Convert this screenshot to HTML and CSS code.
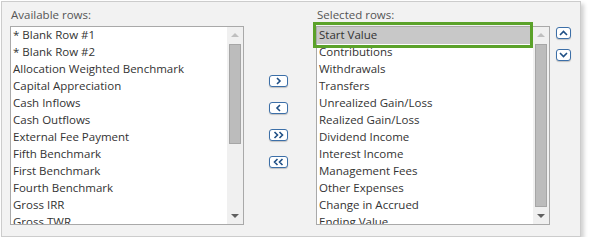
FILE: index.html
```html
<!DOCTYPE html>
<html lang="en">

<head>
  <meta charset="UTF-8">
  <title>Report Rows</title>
  <link rel="stylesheet" href="styles.css">
</head>

<body>
  <div class="panel">
    <div class="column">
      <label class="list-label">Available rows:</label>
      <div class="listbox">
        <ul class="items">
          <li>* Blank Row #1</li>
          <li>* Blank Row #2</li>
          <li>Allocation Weighted Benchmark</li>
          <li>Capital Appreciation</li>
          <li>Cash Inflows</li>
          <li>Cash Outflows</li>
          <li>External Fee Payment</li>
          <li>Fifth Benchmark</li>
          <li>First Benchmark</li>
          <li>Fourth Benchmark</li>
          <li>Gross IRR</li>
          <li>Gross TWR</li>
        </ul>
        <div class="scrollbar">
          <span class="arrow up disabled"></span>
          <div class="track"><div class="thumb thumb-short"></div></div>
          <span class="arrow down"></span>
        </div>
      </div>
    </div>

    <div class="move-buttons">
      <button class="mini" title="Add">
        <svg width="7" height="8" viewBox="0 0 7 8"><path d="M2 1 L5 4 L2 7" /></svg>
      </button>
      <button class="mini" title="Remove">
        <svg width="7" height="8" viewBox="0 0 7 8"><path d="M5 1 L2 4 L5 7" /></svg>
      </button>
      <button class="mini" title="Add all">
        <svg width="11" height="8" viewBox="0 0 11 8"><path d="M1.5 1 L4.5 4 L1.5 7 M6.5 1 L9.5 4 L6.5 7" /></svg>
      </button>
      <button class="mini" title="Remove all">
        <svg width="11" height="8" viewBox="0 0 11 8"><path d="M4.5 1 L1.5 4 L4.5 7 M9.5 1 L6.5 4 L9.5 7" /></svg>
      </button>
    </div>

    <div class="column">
      <label class="list-label">Selected rows:</label>
      <div class="listbox">
        <ul class="items">
          <li class="selected">Start Value</li>
          <li>Contributions</li>
          <li>Withdrawals</li>
          <li>Transfers</li>
          <li>Unrealized Gain/Loss</li>
          <li>Realized Gain/Loss</li>
          <li>Dividend Income</li>
          <li>Interest Income</li>
          <li>Management Fees</li>
          <li>Other Expenses</li>
          <li>Change in Accrued</li>
          <li>Ending Value</li>
        </ul>
        <div class="scrollbar">
          <span class="arrow up disabled"></span>
          <div class="track"><div class="thumb thumb-long"></div></div>
          <span class="arrow down"></span>
        </div>
        <div class="highlight"></div>
      </div>
    </div>

    <div class="order-buttons">
      <button class="mini small" title="Move up">
        <svg width="9" height="6" viewBox="0 0 9 6"><path d="M1 5 L4.5 1.5 L8 5" /></svg>
      </button>
      <button class="mini small" title="Move down">
        <svg width="9" height="6" viewBox="0 0 9 6"><path d="M1 1 L4.5 4.5 L8 1" /></svg>
      </button>
    </div>
  </div>
</body>

</html>
```

FILE: styles.css
```css
*,*::before,*::after { box-sizing: border-box; }

body {
  margin: 0;
  background: #ffffff;
  font-family: "Open Sans", "Noto Sans", sans-serif;
  font-size: 11.5px;
  color: #333333;
}

.panel {
  margin: 1px 0 0 1px;
  width: 580px;
  height: 236px;
  background: #f2f2f2;
  border: 1px solid #cccccc;
  box-shadow: 3px 3px 4px rgba(0,0,0,.18);
  display: flex;
  align-items: flex-start;
  padding: 5px 0 0 8px;
}

.column {
  display: flex;
  flex-direction: column;
  width: 234px;
}

.list-label {
  color: #555555;
  line-height: 16px;
  height: 19px;
  padding-left: 1px;
}

.listbox {
  position: relative;
  display: flex;
  height: 199px;
  background: #ffffff;
  border: 1px solid #a9a9a9;
}

.items {
  list-style: none;
  margin: 0;
  padding: 0;
  flex: 1;
  overflow: hidden;
}

.items li {
  height: 17px;
  line-height: 16px;
  padding-left: 2px;
  white-space: nowrap;
}

.items li.selected {
  background: #c8c8c8;
}

.scrollbar {
  width: 16px;
  background: #f0f0f0;
  display: flex;
  flex-direction: column;
  align-items: center;
}

.arrow {
  width: 0;
  height: 0;
  border-left: 4px solid transparent;
  border-right: 4px solid transparent;
  margin: 6px 0;
}

.arrow.up { border-bottom: 4px solid #606060; }
.arrow.up.disabled { border-bottom-color: #bfbfbf; }
.arrow.down { border-top: 4px solid #606060; }

.track {
  flex: 1;
  width: 100%;
  padding: 1px 2px 0;
}

.thumb {
  background: #bcbcbc;
  border: 1px solid #a6a6a6;
}

.thumb-short { height: 100px; }
.thumb-long { height: 163px; }

.highlight {
  position: absolute;
  left: -4px;
  top: -5px;
  width: 220px;
  height: 26px;
  border: 3px solid #5ba22a;
  pointer-events: none;
}

.move-buttons {
  width: 72px;
  display: flex;
  flex-direction: column;
  align-items: center;
  gap: 15px;
  padding-top: 68px;
  padding-right: 3px;
}

.order-buttons {
  display: flex;
  flex-direction: column;
  gap: 10px;
  padding: 20px 0 0 6px;
}

.mini {
  width: 19px;
  height: 12px;
  padding: 0;
  background: #ffffff;
  border: 1px solid #3c6fa8;
  border-radius: 3px;
  box-shadow: 0 1px 1px rgba(0,0,0,.2);
  display: flex;
  align-items: center;
  justify-content: center;
  cursor: pointer;
}

.mini.small {
  width: 15px;
  height: 12px;
}

.mini svg path {
  fill: none;
  stroke: #1f4f85;
  stroke-width: 1.6;
}
```
